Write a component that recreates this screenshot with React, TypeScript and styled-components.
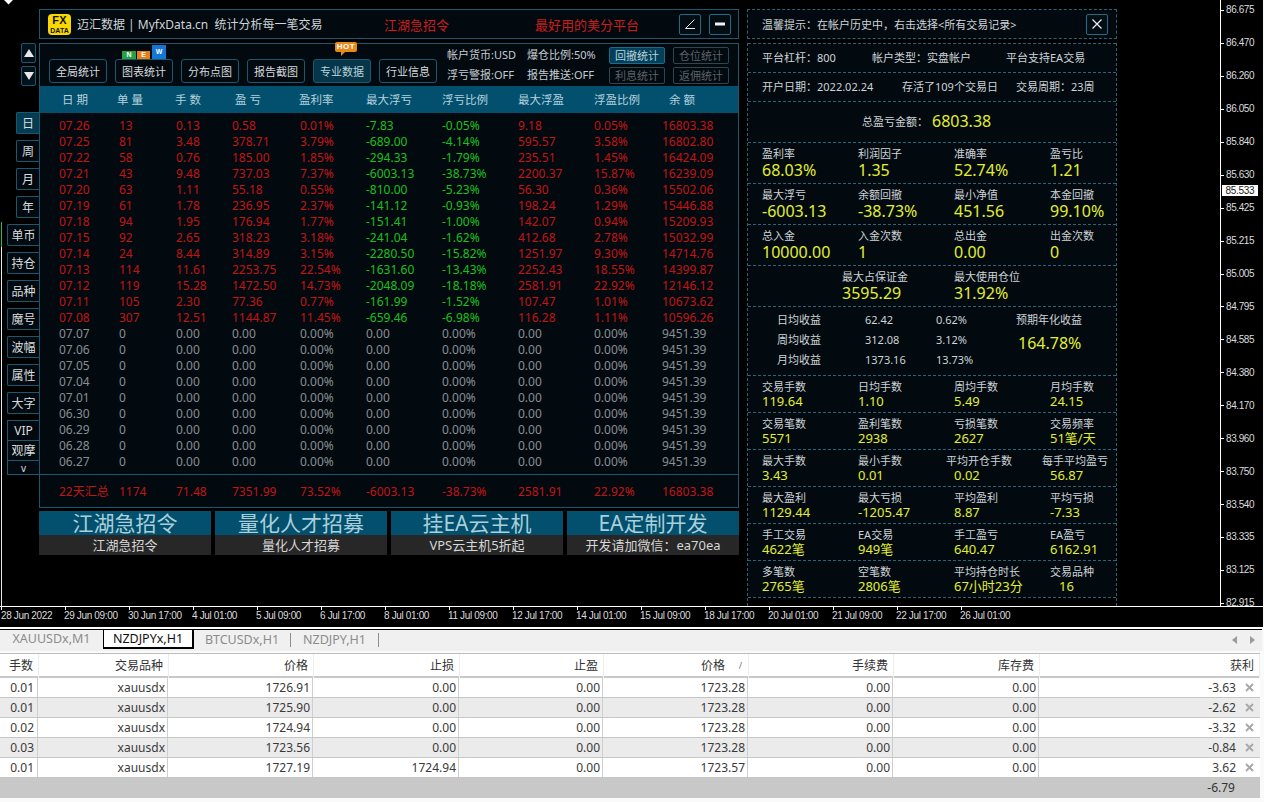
import React from 'react';
import styled, { createGlobalStyle } from 'styled-components';

const SANS = `"Noto Sans", "Noto Sans CJK SC", sans-serif`;
const EDGE = '#1b5870';
const DASH = '#2a6478';
const PANEL = '#020a10';
const TEAL = '#02506e';
const RED = '#c31414';
const GREEN = '#1cc01c';
const GREY = '#8a8e90';
const YELLOW = '#e2ee30';
const SOFT = '#cdd3d6';
const COLON = '\uFF1A';
const COMMA = '\uFF0C';

const Global = createGlobalStyle`
  html, body { margin: 0; padding: 0; background: #fff; }
  body { font-family: ${SANS}; }
  * { box-sizing: border-box; }
`;

const Screen = styled.div`
  width: 1264px; height: 802px; overflow: hidden; display: flex; flex-direction: column;
  background: #fafafa; position: relative;
`;
const Chart = styled.div`
  height: 629px; background: #000; display: flex; flex-direction: column; position: relative;
  border-bottom: 2px solid #fff; margin-right: 1px;
`;
const ChartBody = styled.div`display: flex; height: 607px; border-bottom: 1px solid #fff;`;
const Canvas = styled.div`flex: 1; display: flex; padding: 9px 0 0 7px; min-width: 0;`;
const LeftEdge = styled.i`
  position: absolute; left: 1px; top: ${p => p.$top}px; height: ${p => p.$h}px; width: 1px; background: ${p => p.$c};
`;
const Diamond = styled.i`
  position: absolute; left: 5px; top: -4px; width: 7px; height: 7px; background: #fff; transform: rotate(45deg);
`;

/* left rail */
const Rail = styled.nav`width: 32px; display: flex; flex-direction: column; align-items: flex-end; padding-top: 34px; flex: none;`;
const ArrowBtn = styled.button`
  width: 15px; height: 20px; margin: 0 3px 3px 0; padding: 0; display: flex; align-items: center; justify-content: center;
  background: #03121a; border: 1px solid ${EDGE}; border-radius: 2px;
`;
const RailSpacer = styled.div`height: 23px;`;
const RailBtn = styled.button`
  width: ${p => p.$w}px; height: 22px; margin-bottom: 6px; padding: 1px 0 0; font: 12px/20px ${SANS}; color: #d8dcde; text-align: center;
  background: ${p => (p.$on ? '#063c52' : '#020a10')}; border: 1px solid ${EDGE}; border-right: 0; border-radius: 2px 0 0 2px;
`;
const RailStack = styled.button`
  width: 32px; height: ${p => p.$h}px; padding: 0; font: ${p => p.$fs}px/1 ${SANS}; color: #d8dcde;
  background: #020a10; border: 1px solid ${EDGE}; border-right: 0; border-top-width: ${p => (p.$first ? 1 : 0)}px;
`;

/* main column */
const Main = styled.main`width: 700px; flex: none; display: flex; flex-direction: column;`;
const TitleBar = styled.header`
  height: 30px; background: ${PANEL}; border: 1px solid ${EDGE}; display: flex; align-items: center;
  padding-left: 8px; margin-bottom: 4px; position: relative;
`;
const Logo = styled.div`
  width: 23px; height: 21px; border-radius: 4px; background: #f7d900; color: #111; display: flex; flex-direction: column;
  align-items: center; justify-content: center; font-family: "Liberation Sans", sans-serif; font-weight: 700; flex: none;
`;
const LogoFx = styled.span`font-size: 11px; line-height: 13px; letter-spacing: .3px;`;
const LogoData = styled.span`font-size: 7px; line-height: 8px;`;
const Brand = styled.span`font-size: 12px; color: ${SOFT}; margin-left: 6px; white-space: pre; width: 307px; flex: none;`;
const RedLink = styled.span`font-size: 13px; color: #cc1c1c; width: ${p => p.$w}px; flex: none;`;
const SquareBtn = styled.button`
  width: 22px; height: 21px; padding: 0; margin-right: ${p => p.$mr ?? 8}px; background: #030d14; border: 1px solid #246a86; border-radius: 2px;
  display: flex; align-items: center; justify-content: center; flex: none;
`;

const Panel = styled.section`background: ${PANEL}; border: 1px solid ${EDGE}; height: 465px; display: flex; flex-direction: column;`;
const Toolbar = styled.div`height: 42px; display: flex; padding-left: 9px; flex: none;`;
const ToolBtns = styled.div`display: flex; gap: 8px; padding-top: 15px; height: 39px; width: 398px; flex: none;`;
const ToolBtn = styled.button`
  position: relative; width: 58px; height: 24px; padding: 1px 0 0; font: 11px/22px ${SANS}; color: ${p => (p.$on ? '#b9d3dd' : '#d5d9db')};
  background: ${p => (p.$on ? '#05364a' : '#020a10')}; border: 1px solid ${EDGE}; border-radius: 3px;
`;
const NewBadges = styled.div`position: absolute; left: 6px; top: -15px; display: flex; align-items: flex-end; height: 14px;`;
const NewBadge = styled.span`
  width: ${p => p.$w}px; height: ${p => p.$h}px; background: ${p => p.$bg}; color: #fff; font: 700 7px/${p => p.$h}px "Liberation Sans", sans-serif;
  text-align: center; margin-right: ${p => p.$gap}px;
`;
const HotBadge = styled.span`
  position: absolute; left: 21px; top: -18px; width: 22px; height: 10px; background: #e8891a; border-radius: 2px; color: #fff;
  font: 700 8px/10px "Liberation Sans", sans-serif; text-align: center; letter-spacing: .5px;
  &::after { content: ''; position: absolute; left: 6px; top: 10px; border: 2px solid transparent; border-top-color: #e8891a; border-left-color: #e8891a; }
`;
const Info = styled.div`
  display: grid; grid-template-columns: 80px 82px; grid-auto-rows: 20px; font-size: 11px; line-height: 20px; color: #c5ccd0; padding-top: 1px; flex: none;
  white-space: nowrap;
`;
const Mini = styled.div`display: grid; grid-template-columns: 56px 56px; grid-auto-rows: 17px; gap: 3px 8px; padding-top: 3px; flex: none;`;
const MiniBtn = styled.button`
  padding: 0; font: 11px/15px ${SANS}; color: ${p => (p.$on ? '#b9d3dd' : '#5b6468')};
  background: ${p => (p.$on ? '#05405a' : 'transparent')}; border: 1px solid ${p => (p.$on ? '#1b6a8a' : '#2d4650')}; border-radius: 2px;
`;
const HeadRow = styled.div`
  height: 27px; background: ${TEAL}; color: #b6d1dc; font-size: 11.5px; line-height: 27px; padding-left: 22px; flex: none;
  display: grid; grid-template-columns: 55px 58px 60px 64px 67px 76px 76px 76px 75px 1fr; white-space: pre;
`;
const Rows = styled.div`flex: 1; padding-top: 5px; border-bottom: 1px solid ${EDGE};`;
const DataRow = styled.div`
  display: grid; grid-template-columns: 60px 57px 56px 68px 66px 76px 76px 76px 68px 1fr; padding-left: 19px;
  height: 16px; font-size: 12px; line-height: 16px; white-space: nowrap;
`;
const Cell = styled.span`color: ${p => p.$c};`;
const SumRow = styled(DataRow)`height: 32px; line-height: 34px; flex: none;`;

const Promos = styled.div`display: grid; grid-template-columns: repeat(4, 172px); gap: 4px; margin-top: 3px;`;
const Promo = styled.a`display: flex; flex-direction: column; text-align: center; color: inherit;`;
const PromoTop = styled.div`height: 24px; background: ${TEAL}; color: #a9cfdb; font-size: 21px; line-height: 24px; white-space: nowrap;`;
const PromoSub = styled.div`height: 20px; background: #272727; color: #d6d6d6; font-size: 13px; line-height: 20px; white-space: nowrap;`;

/* side column */
const Side = styled.aside`width: 370px; flex: none; margin-left: 8px; display: flex; flex-direction: column;`;
const SideTitle = styled.div`
  height: 30px; background: ${PANEL}; border: 1px dashed ${DASH}; padding: 0 8px 0 14px; display: flex; align-items: center; justify-content: space-between;
  font-size: 11px; color: ${SOFT}; margin-bottom: 4px; flex: none; white-space: nowrap;
`;
const SideBody = styled.div`flex: 1; border-left: 1px dashed ${DASH}; border-right: 1px dashed ${DASH}; min-height: 0;`;
const SideRow = styled.div`
  height: ${p => p.$h}px; background: ${PANEL}; border-top: 1px dashed ${DASH}; position: relative; font-size: 11px; color: ${SOFT};
`;
const LastLine = styled.div`border-top: 1px dashed ${DASH};`;
const Meta = styled.div`display: flex; height: 100%; align-items: center; padding: 0 0 2px 14px; white-space: nowrap;`;
const MetaItem = styled.span`width: ${p => p.$w}px; flex: none;`;
const Total = styled(Meta)`padding-left: 114px;`;
const TotalValue = styled.span`font-size: 16px; color: ${YELLOW}; margin-left: 4px;`;
const StatGrid = styled.div`
  display: grid; grid-template-columns: repeat(4, 96px); padding: 3px 0 0 14px; white-space: nowrap;
`;
const CenterGrid = styled.div`display: grid; grid-template-columns: 112px 112px; padding: 3px 0 0 94px; white-space: nowrap;`;
const StatLabel = styled.div`font-size: 11px; line-height: 15px; color: ${SOFT}; margin-left: ${p => p.$shift || 0}px;`;
const StatValue = styled.div`
  font-size: ${p => (p.$big ? 16 : 13)}px; line-height: ${p => (p.$big ? 18 : 15)}px; color: ${YELLOW}; margin-left: ${p => p.$shift || 0}px;
`;
const Yield = styled.div`display: flex; padding: 3px 0 0 0;`;
const YieldTable = styled.div`
  width: 268px; display: grid; grid-template-columns: 73px 44px 71px 1fr; grid-auto-rows: 20px; line-height: 20px; font-size: 11px; flex: none;
`;
const YieldLabel = styled.span`text-align: right;`;
const YieldGap = styled.span``;
const Forecast = styled.div`display: flex; flex-direction: column;`;
const ForecastValue = styled.span`font-size: 16px; line-height: 26px; color: ${YELLOW}; margin-left: 2px;`;
const ForecastLabel = styled.span`line-height: 20px;`;

/* axes */
const PriceAxis = styled.div`width: 43px; flex: none; border-left: 1px solid #fff; position: relative;`;
const PriceList = styled.div`margin-top: -6px; height: 600px;`;
const Price = styled.div`
  height: 32.95px; display: flex; align-items: center; padding-left: 5px; font: 10px/1 "Liberation Sans", sans-serif; color: #dcdcdc; position: relative;
  letter-spacing: -.4px;
  &::before { content: ''; position: absolute; left: 0; top: 16px; width: 3px; height: 1px; background: #fff; }
`;
const PriceTag = styled.span`
  position: absolute; left: 1px; top: 185px; width: 36px; height: 11px; background: #fff; color: #222; text-align: center;
  font: 10px/11px "Liberation Sans", sans-serif; letter-spacing: -.3px;
`;
const TimeAxis = styled.div`display: flex; height: 19px; overflow: hidden;`;
const TimeCell = styled.div`
  width: 64px; flex: none; position: relative; font: 10px/1 "Liberation Sans", sans-serif; color: #dcdcdc; padding-top: 4px; white-space: nowrap; letter-spacing: -.35px;
  padding-left: ${p => (p.$first ? 1 : 0)}px;
  &::before { content: ''; position: absolute; left: 1px; top: 0; width: 1px; height: 3px; background: #fff; }
`;

/* bottom */
const TabStrip = styled.div`
  height: 22px; background: #f0f0f0; border-top: 1px solid #000; margin-right: 2px; display: flex; align-items: flex-start; flex: none;
  font-size: 12.5px; color: #8c8c8c; position: relative;
`;
const Tab = styled.div`
  height: 18px; line-height: 17px; width: ${p => p.$w}px; text-align: center; flex: none; white-space: nowrap;
  ${p => p.$on && `background:#fff; color:#111; border:1px solid #000; border-top:0; border-right-width:2px; border-bottom-width:2px; height:19px;`}
  ${p => p.$sep && `border-right:1px solid #8c8c8c; height:14px; line-height:13px; margin-top:3px;`}
`;
const TabArrows = styled.div`position: absolute; right: 7px; top: 6px; display: flex; gap: 13px;`;
const Orders = styled.div`margin-top: 2px; width: 1260px; border-top: 1px solid #bdbdbd; flex: none;`;
const COLS = '39px 130px 145px 146px 144px 145px 145px 146px 220px';
const OrderHead = styled.div`display: grid; grid-template-columns: ${COLS}; height: 24px; background: #fff; border-bottom: 2px solid #c8c8c8;`;
const HeadCell = styled.div`
  text-align: right; font-size: 12px; line-height: 24px; color: #333; padding-right: ${p => p.$pr || 5}px; border-right: 1px solid #eee; position: relative; white-space: nowrap;
`;
const SortMark = styled.span`position: absolute; right: 6px; top: 0; font-size: 9px; color: #777;`;
const OrderRow = styled.div`
  display: grid; grid-template-columns: ${COLS}; height: 20px; background: ${p => (p.$alt ? '#ebebeb' : '#fff')};
  border-bottom: 1px solid #c6c6c6;
`;
const OrderCell = styled.div`
  text-align: right; font-size: 12px; line-height: 19px; color: #3a3a3a; padding-right: ${p => p.$pr ?? 2}px; border-right: 1px solid #cfcfcf; margin-right: 1px; white-space: nowrap;
`;
const ProfitCell = styled(OrderCell)`
  border-right: 0; margin-right: 0; padding-right: 6px; display: flex; justify-content: flex-end; align-items: center; gap: 9px;
`;
const Footer = styled.div`height: 20px; width: 1260px; background: #c8c8c8; text-align: right; padding-right: 25px; font-size: 12px; line-height: 19px; color: #333; flex: none; margin-top: 0;`;

const Tri = ({ up, c = '#e8e8e8', s = 10 }: { up?: boolean; c?: string; s?: number }) => (
  <svg width={s} height={s} viewBox="0 0 10 10">
    <path d={up ? 'M5 1 L10 9 L0 9 Z' : 'M5 9 L10 1 L0 1 Z'} fill={c} />
  </svg>
);

const railTop = [['日', true], ['周'], ['月'], ['年']] as const;
const railMid = ['单币', '持仓', '品种', '魔号', '波幅', '属性', '大字'];
const tools = ['全局统计', '图表统计', '分布点图', '报告截图', '专业数据', '行业信息'];
const heads = ['日 期', '单 量', '手 数', '盈 亏', '盈利率', '最大浮亏', '浮亏比例', '最大浮盈', '浮盈比例', '余 额'];
const filled = `07.26 13 0.13 0.58 0.01% -7.83 -0.05% 9.18 0.05% 16803.38
07.25 81 3.48 378.71 3.79% -689.00 -4.14% 595.57 3.58% 16802.80
07.22 58 0.76 185.00 1.85% -294.33 -1.79% 235.51 1.45% 16424.09
07.21 43 9.48 737.03 7.37% -6003.13 -38.73% 2200.37 15.87% 16239.09
07.20 63 1.11 55.18 0.55% -810.00 -5.23% 56.30 0.36% 15502.06
07.19 61 1.78 236.95 2.37% -141.12 -0.93% 198.24 1.29% 15446.88
07.18 94 1.95 176.94 1.77% -151.41 -1.00% 142.07 0.94% 15209.93
07.15 92 2.65 318.23 3.18% -241.04 -1.62% 412.68 2.78% 15032.99
07.14 24 8.44 314.89 3.15% -2280.50 -15.82% 1251.97 9.30% 14714.76
07.13 114 11.61 2253.75 22.54% -1631.60 -13.43% 2252.43 18.55% 14399.87
07.12 119 15.28 1472.50 14.73% -2048.09 -18.18% 2581.91 22.92% 12146.12
07.11 105 2.30 77.36 0.77% -161.99 -1.52% 107.47 1.01% 10673.62
07.08 307 12.51 1144.87 11.45% -659.46 -6.98% 116.28 1.11% 10596.26`.split('\n').map(l => l.split(' '));
const empties = ['07.07', '07.06', '07.05', '07.04', '07.01', '06.30', '06.29', '06.28', '06.27'];
const summary = ['22天汇总', '1174', '71.48', '7351.99', '73.52%', '-6003.13', '-38.73%', '2581.91', '22.92%', '16803.38'];
const promos = [
  ['江湖急招令', '江湖急招令'], ['量化人才招募', '量化人才招募'], ['挂EA云主机', 'VPS云主机5折起'], ['EA定制开发', `开发请加微信${COLON}ea70ea`],
];
type Stat = [string, string, number?, number?];
const bigStats: Stat[][] = [
  [['盈利率', '68.03%'], ['利润因子', '1.35'], ['准确率', '52.74%'], ['盈亏比', '1.21']],
  [['最大浮亏', '-6003.13'], ['余额回撤', '-38.73%'], ['最小净值', '451.56'], ['本金回撤', '99.10%']],
  [['总入金', '10000.00'], ['入金次数', '1'], ['总出金', '0.00'], ['出金次数', '0']],
];
const smallStats: Stat[][] = [
  [['交易手数', '119.64'], ['日均手数', '1.10'], ['周均手数', '5.49'], ['月均手数', '24.15']],
  [['交易笔数', '5571'], ['盈利笔数', '2938'], ['亏损笔数', '2627'], ['交易频率', '51笔/天']],
  [['最大手数', '3.43'], ['最小手数', '0.01'], ['平均开仓手数', '0.02', -8], ['每手平均盈亏', '56.87', -8]],
  [['最大盈利', '1129.44'], ['最大亏损', '-1205.47'], ['平均盈利', '8.87'], ['平均亏损', '-7.33']],
  [['手工交易', '4622笔'], ['EA交易', '949笔'], ['手工盈亏', '640.47'], ['EA盈亏', '6162.91']],
  [['多笔数', '2765笔'], ['空笔数', '2806笔'], ['平均持仓时长', '67小时23分'], ['交易品种', '16', 0, 9]],
];
const yields = [['日均收益', '62.42', '0.62%'], ['周均收益', '312.08', '3.12%'], ['月均收益', '1373.16', '13.73%']];
const prices = ['86.675', '86.470', '86.260', '86.050', '85.840', '85.630', '85.425', '85.215', '85.005', '84.795', '84.585', '84.380', '84.170', '83.960', '83.750', '83.540', '83.335', '83.125', '82.915'];
const times = ['28 Jun 2022', '29 Jun 09:00', '30 Jun 17:00', '4 Jul 01:00', '5 Jul 09:00', '6 Jul 17:00', '8 Jul 01:00', '11 Jul 09:00', '12 Jul 17:00', '14 Jul 01:00', '15 Jul 09:00', '18 Jul 17:00', '20 Jul 01:00', '21 Jul 09:00', '22 Jul 17:00', '26 Jul 01:00'];
const orders = [
  ['0.01', 'xauusdx', '1726.91', '0.00', '0.00', '1723.28', '0.00', '0.00', '-3.63'],
  ['0.01', 'xauusdx', '1725.90', '0.00', '0.00', '1723.28', '0.00', '0.00', '-2.62'],
  ['0.02', 'xauusdx', '1724.94', '0.00', '0.00', '1723.28', '0.00', '0.00', '-3.32'],
  ['0.03', 'xauusdx', '1723.56', '0.00', '0.00', '1723.28', '0.00', '0.00', '-0.84'],
  ['0.01', 'xauusdx', '1727.19', '1724.94', '0.00', '1723.57', '0.00', '0.00', '3.62'],
];
const orderHeads = ['手数', '交易品种', '价格', '止损', '止盈', '价格', '手续费', '库存费'];

const StatRow = ({ items, big, h }: { items: Stat[]; big?: boolean; h: number }) => (
  <SideRow $h={h}>
    <StatGrid>
      {items.map(([l, v, shift, vShift]) => (
        <div key={l}>
          <StatLabel $shift={shift}>{l}</StatLabel>
          <StatValue $big={big} $shift={vShift}>{v}</StatValue>
        </div>
      ))}
    </StatGrid>
  </SideRow>
);

export default function App() {
  return (
    <Screen>
      <Global />
      <Chart>
        <LeftEdge $top={222} $h={25} $c="#39b54a" />
        <LeftEdge $top={247} $h={360} $c="#e8e8e8" />
        <Diamond />
        <ChartBody>
          <Canvas>
            <Rail>
              <ArrowBtn><Tri up /></ArrowBtn>
              <ArrowBtn><Tri /></ArrowBtn>
              <RailSpacer />
              {railTop.map(([t, on]) => <RailBtn key={t} $w={23} $on={!!on}>{t}</RailBtn>)}
              {railMid.map(t => <RailBtn key={t} $w={32}>{t}</RailBtn>)}
              <RailStack $first $h={21} $fs={12}>VIP</RailStack>
              <RailStack $h={20} $fs={12}>观摩</RailStack>
              <RailStack $h={14} $fs={10}>v</RailStack>
            </Rail>
            <Main>
              <TitleBar>
                <Logo><LogoFx>FX</LogoFx><LogoData>DATA</LogoData></Logo>
                <Brand>迈汇数据 | MyfxData.cn  统计分析每一笔交易</Brand>
                <RedLink $w={151}>江湖急招令</RedLink>
                <RedLink $w={144}>最好用的美分平台</RedLink>
                <SquareBtn aria-label="angle">
                  <svg width="12" height="12" viewBox="0 0 12 12"><path d="M10.5 1.5 L1.5 10.5 H11" fill="none" stroke="#e8e8e8" strokeWidth="1" /></svg>
                </SquareBtn>
                <SquareBtn aria-label="minimize">
                  <svg width="12" height="12" viewBox="0 0 12 12"><rect x="1" y="4.5" width="10" height="3" fill="#f2f2f2" /></svg>
                </SquareBtn>
              </TitleBar>
              <Panel>
                <Toolbar>
                  <ToolBtns>
                    {tools.map((t, i) => (
                      <ToolBtn key={t} $on={i === 4}>
                        {t}
                        {i === 1 && (
                          <NewBadges>
                            <NewBadge $w={14} $h={8} $bg="#27a243" $gap={1}>N</NewBadge>
                            <NewBadge $w={13} $h={8} $bg="#ec7d12" $gap={2}>E</NewBadge>
                            <NewBadge $w={14} $h={14} $bg="#1477d6" $gap={0}>W</NewBadge>
                          </NewBadges>
                        )}
                        {i === 4 && <HotBadge>HOT</HotBadge>}
                      </ToolBtn>
                    ))}
                  </ToolBtns>
                  <Info>
                    <span>帐户货币:USD</span><span>爆仓比例:50%</span>
                    <span>浮亏警报:OFF</span><span>报告推送:OFF</span>
                  </Info>
                  <Mini>
                    <MiniBtn $on>回撤统计</MiniBtn><MiniBtn>仓位统计</MiniBtn>
                    <MiniBtn>利息统计</MiniBtn><MiniBtn>返佣统计</MiniBtn>
                  </Mini>
                </Toolbar>
                <HeadRow>{heads.map(h => <span key={h}>{h}</span>)}</HeadRow>
                <Rows>
                  {filled.map(r => (
                    <DataRow key={r[0]}>
                      {r.map((v, i) => <Cell key={i} $c={i === 5 || i === 6 ? GREEN : RED}>{v}</Cell>)}
                    </DataRow>
                  ))}
                  {empties.map(d => (
                    <DataRow key={d}>
                      {[d, '0', '0.00', '0.00', '0.00%', '0.00', '0.00%', '0.00', '0.00%', '9451.39'].map((v, i) => <Cell key={i} $c={GREY}>{v}</Cell>)}
                    </DataRow>
                  ))}
                </Rows>
                <SumRow>{summary.map((v, i) => <Cell key={i} $c={RED}>{v}</Cell>)}</SumRow>
              </Panel>
              <Promos>
                {promos.map(([a, b]) => (
                  <Promo key={a}>
                    <PromoTop>{a}</PromoTop>
                    <PromoSub>{b}</PromoSub>
                  </Promo>
                ))}
              </Promos>
            </Main>
            <Side>
              <SideTitle>
                <span>{`温馨提示${COLON}在帐户历史中${COMMA}右击选择<所有交易记录>`}</span>
                <SquareBtn aria-label="close" $mr={0}>
                  <svg width="12" height="12" viewBox="0 0 12 12"><path d="M1.5 1.5 L10.5 10.5 M10.5 1.5 L1.5 10.5" stroke="#f0f0f0" strokeWidth="1.2" /></svg>
                </SquareBtn>
              </SideTitle>
              <SideBody>
                <SideRow $h={29}>
                  <Meta>
                    <MetaItem $w={110}>{`平台杠杆${COLON}800`}</MetaItem>
                    <MetaItem $w={134}>{`帐户类型${COLON}实盘帐户`}</MetaItem>
                    <MetaItem $w={100}>平台支持EA交易</MetaItem>
                  </Meta>
                </SideRow>
                <SideRow $h={29}>
                  <Meta>
                    <MetaItem $w={140}>{`开户日期${COLON}2022.02.24`}</MetaItem>
                    <MetaItem $w={114}>存活了109个交易日</MetaItem>
                    <MetaItem $w={90}>{`交易周期${COLON}23周`}</MetaItem>
                  </Meta>
                </SideRow>
                <SideRow $h={41}>
                  <Total>{`总盈亏金额${COLON}`}<TotalValue>6803.38</TotalValue></Total>
                </SideRow>
                {bigStats.map(items => <StatRow key={items[0][0]} items={items} big h={41} />)}
                <SideRow $h={41}>
                  <CenterGrid>
                    <div><StatLabel>最大占保证金</StatLabel><StatValue $big>3595.29</StatValue></div>
                    <div><StatLabel>最大使用仓位</StatLabel><StatValue $big>31.92%</StatValue></div>
                  </CenterGrid>
                </SideRow>
                <SideRow $h={69}>
                  <Yield>
                    <YieldTable>
                      {yields.map(([a, b, c]) => (
                        <React.Fragment key={a}>
                          <YieldLabel>{a}</YieldLabel><YieldGap />
                          <span>{b}</span><span>{c}</span>
                        </React.Fragment>
                      ))}
                    </YieldTable>
                    <Forecast>
                      <ForecastLabel>预期年化收益</ForecastLabel>
                      <ForecastValue>164.78%</ForecastValue>
                    </Forecast>
                  </Yield>
                </SideRow>
                {smallStats.map(items => <StatRow key={items[0][0]} items={items} h={37} />)}
                <LastLine />
              </SideBody>
            </Side>
          </Canvas>
          <PriceAxis>
            <PriceList>{prices.map(p => <Price key={p}>{p}</Price>)}</PriceList>
            <PriceTag>85.533</PriceTag>
          </PriceAxis>
        </ChartBody>
        <TimeAxis>
          {times.map((t, i) => <TimeCell key={t} $first={i === 0}>{t}</TimeCell>)}
        </TimeAxis>
      </Chart>
      <TabStrip>
        <Tab $w={103}>XAUUSDx,M1</Tab>
        <Tab $w={91} $on>NZDJPYx,H1</Tab>
        <Tab $w={97} $sep>BTCUSDx,H1</Tab>
        <Tab $w={88} $sep>NZDJPY,H1</Tab>
        <TabArrows>
          <svg width="5" height="8" viewBox="0 0 5 8"><path d="M5 0 V8 L0 4 Z" fill="#9a9a9a" /></svg>
          <svg width="5" height="8" viewBox="0 0 5 8"><path d="M0 0 V8 L5 4 Z" fill="#9a9a9a" /></svg>
        </TabArrows>
      </TabStrip>
      <Orders>
        <OrderHead>
          {orderHeads.map((h, i) => (
            <HeadCell key={i} $pr={i === 5 ? 23 : 5}>{h}{i === 5 && <SortMark>/</SortMark>}</HeadCell>
          ))}
          <HeadCell $pr={5}>获利</HeadCell>
        </OrderHead>
        {orders.map((r, i) => (
          <OrderRow key={i} $alt={i % 2 === 1}>
            {r.slice(0, 8).map((v, j) => <OrderCell key={j} $pr={j === 0 ? 3 : 2}>{v}</OrderCell>)}
            <ProfitCell>
              {r[8]}
              <svg width="9" height="9" viewBox="0 0 9 9"><path d="M1 1 L8 8 M8 1 L1 8" stroke="#a9a9a9" strokeWidth="2" /></svg>
            </ProfitCell>
          </OrderRow>
        ))}
      </Orders>
      <Footer>-6.79</Footer>
    </Screen>
  );
}
